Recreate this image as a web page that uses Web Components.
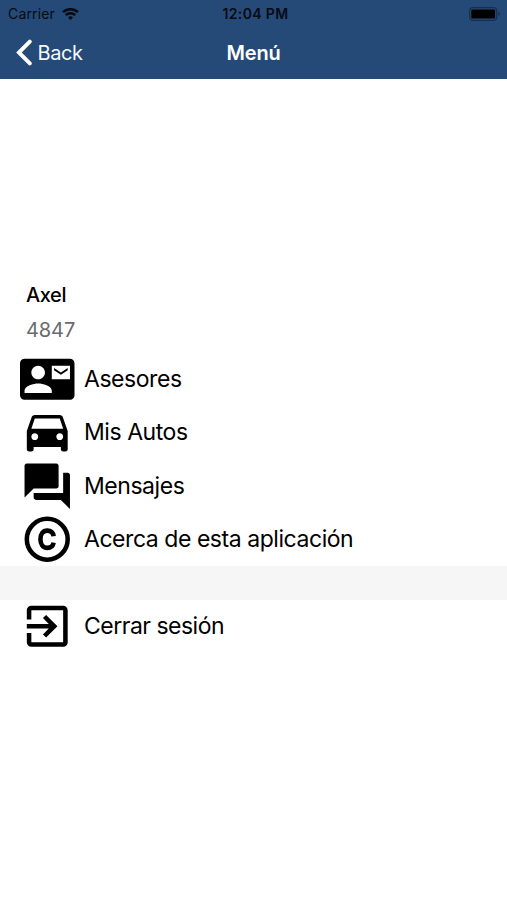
<!DOCTYPE html>
<html lang="es">
<head>
<meta charset="utf-8">
<title>Menú</title>
<style>
html, body { margin: 0; height: 100%; background: #fff; overflow: hidden; }
body { font-family: Inter, "Liberation Sans", sans-serif; color: #000; }
</style>
</head>
<body>
<menu-screen></menu-screen>
<script>
const define = (name, html) => customElements.define(name, class extends HTMLElement {
  constructor() {
    super();
    const t = document.createElement('template');
    t.innerHTML = html;
    this.attachShadow({ mode: 'open' }).append(t.content.cloneNode(true));
  }
});

define('status-bar', `
<style>
:host { display: grid; grid-template-columns: 1fr auto 1fr; align-items: center; height: 27px; padding: 0 6px 0 8px; box-sizing: border-box; color: #060b14; }
.left { display: flex; align-items: center; gap: 7px; font-size: 14px; letter-spacing: .15px; }
.time { font-size: 14px; font-weight: 600; letter-spacing: .35px; padding-left: 2px; }
.battery { justify-self: end; }
svg { display: block; }
</style>
<div class="left"><span>Carrier</span>
<svg width="17" height="12" viewBox="0 0 17 12" fill="none" stroke="currentColor" stroke-width="2.5"><path d="M1 4.2a10.8 10.8 0 0 1 15 0M3.7 7.1a6.9 6.9 0 0 1 9.6 0"/><path d="M8.5 12 6 9.4a3.6 3.6 0 0 1 5 0z" fill="currentColor" stroke="none"/></svg></div>
<span class="time">12:04 PM</span>
<svg class="battery" width="32" height="14" viewBox="0 0 32 14"><rect x=".7" y=".7" width="27" height="12.6" rx="3.2" fill="none" stroke="#152e4e" stroke-width="1.2"/><rect x="2.3" y="2.4" width="23.8" height="9.2" rx="1.3" fill="#000"/><path d="M29.3 4.8c2 .7 2 3.7 0 4.4z" fill="#152e4e"/></svg>`);

define('nav-bar', `
<style>
:host { display: grid; grid-template-columns: 1fr auto 1fr; align-items: center; height: 51px; padding: 0 16px; box-sizing: border-box; color: #fff; }
.back { display: flex; align-items: center; gap: 4.5px; font-size: 20px; letter-spacing: -.4px; color: #f4f7fb; }
.title { font-size: 20px; font-weight: 600; letter-spacing: -.2px; }
svg { display: block; }
</style>
<div class="back"><svg width="17" height="27" viewBox="0 0 17 27" fill="none" stroke="#fff" stroke-width="3.9" stroke-linecap="round"><path d="M13.8 2.600 2.900 13.500l10.900 10.900"/></svg><span><slot name="back"></slot></span></div>
<span class="title"><slot></slot></span><span></span>`);

define('user-info', `
<style>
:host { display: block; padding: 199px 26px 0; }
.name { font-size: 20px; line-height: 34px; font-weight: 500; letter-spacing: -.4px; }
.code { font-size: 20px; line-height: 36px; letter-spacing: -.1px; color: #6a6a6a; }
</style>
<div class="name"><slot></slot></div><div class="code"><slot name="code"></slot></div>`);

define('menu-row', `
<style>
:host { display: flex; align-items: center; height: 53.3px; padding-left: 20px; gap: 9.5px; font-size: 23px; letter-spacing: -.45px; white-space: nowrap; }
.label { padding-bottom: var(--label-lift, 2px); }
::slotted(svg) { width: 54.5px; height: 54.5px; flex: none; }
</style>
<slot name="icon"></slot><span class="label"><slot></slot></span>`);

define('menu-screen', `
<style>
:host { display: flex; flex-direction: column; height: 900px; background: #fff; }
header { background: #254a77; height: 79px; flex: none; }
nav { padding-top: 5px; }
.gap { height: 34px; background: #f6f6f6; }
.gap + menu-row { height: 52px; --label-lift: 0px; letter-spacing: -.5px; }
</style>
<header><status-bar></status-bar><nav-bar><span slot="back">Back</span>Menú</nav-bar></header>
<user-info>Axel<span slot="code">4847</span></user-info>
<nav>
<menu-row><svg slot="icon" viewBox="0 0 24 24"><path d="M21 8V7l-3 2-3-2v1l3 2 3-2zm1-5H2C.9 3 0 3.9 0 5v14c0 1.1.9 2 2 2h20c1.100 0 2-.9 2-2V5c0-1.100-.9-2-2-2zM8 6c1.660 0 3 1.340 3 3s-1.340 3-3 3-3-1.340-3-3 1.340-3 3-3zm6 12H2v-1c0-2 4-3.100 6-3.100s6 1.100 6 3.100v1zm8-6h-8V6h8v6z"/></svg>Asesores</menu-row>
<menu-row><svg slot="icon" viewBox="0 0 24 24"><path d="M18.920 5.010C18.720 4.420 18.160 4 17.500 4h-11c-.66 0-1.210.42-1.420 1.010L3 11v8c0 .55.45 1 1 1h1c.55 0 1-.45 1-1v-1h12v1c0 .55.45 1 1 1h1c.55 0 1-.45 1-1v-8l-2.080-5.990zM6.500 15c-.83 0-1.500-.67-1.500-1.500S5.670 12 6.500 12s1.500.67 1.500 1.500S7.330 15 6.500 15zm11 0c-.83 0-1.500-.67-1.500-1.500s.67-1.500 1.500-1.500 1.500.67 1.500 1.500-.67 1.500-1.500 1.500zM5 10l1.500-4.500h11L19 10H5z"/></svg>Mis Autos</menu-row>
<menu-row style="--label-lift: 0px"><svg slot="icon" viewBox="0 0 24 24"><path d="M21 6h-2v9H6v2c0 .55.45 1 1 1h11l4 4V7c0-.55-.45-1-1-1zm-4 6V3c0-.55-.45-1-1-1H3c-.55 0-1 .45-1 1v14l4-4h10c.55 0 1-.45 1-1z"/></svg>Mensajes</menu-row>
<menu-row><svg slot="icon" viewBox="0 0 24 24" fill="none" stroke="#000" stroke-width="2"><circle cx="12" cy="12" r="9"/><path d="M14.800 10.700C14.600 9.100 13.700 8.200 12 8.200c-2 0-3 1.600-3 3.800s1 3.800 3 3.800c1.700 0 2.600-.9 2.800-2.300"/></svg>Acerca de esta aplicación</menu-row>
<div class="gap"></div>
<menu-row><svg slot="icon" viewBox="0 0 24 24"><path d="M10.090 15.590 11.500 17l5-5-5-5-1.410 1.410L12.670 11H3v2h9.670l-2.580 2.590zM19 3H5c-1.110 0-2 .9-2 2v4h2V5h14v14H5v-4H3v4c0 1.100.89 2 2 2h14c1.100 0 2-.9 2-2V5c0-1.100-.9-2-2-2z"/></svg>Cerrar sesión</menu-row>
</nav>`);
</script>
</body>
</html>
